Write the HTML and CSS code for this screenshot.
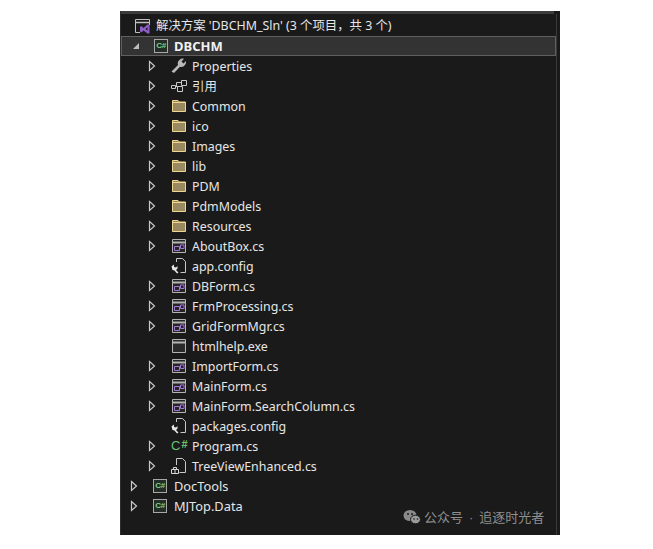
FILE: index.html
```html
<!DOCTYPE html>
<html lang="zh">
<head>
<meta charset="utf-8">
<title>Solution Explorer</title>
<link rel="stylesheet" href="styles.css">
</head>
<body>
<svg class="defs" width="0" height="0" aria-hidden="true">
  <defs>
    <symbol id="arrow" viewBox="0 0 8 12"><path d="M1.500 1.500 6.500 6 1.500 10.500Z" fill="none" stroke="#c8c8c8" stroke-width="1.200"/></symbol>
    <symbol id="folder" viewBox="0 0 16 16"><path d="M1.500 13.500V2.500H7L8.500 4H14.500V13.500Z" fill="#9a8a62" stroke="#f0d68e"/><path d="M2 4.500H14" stroke="#f0d68e"/></symbol>
    <symbol id="form" viewBox="0 0 16 16"><path d="M1.500 1.500H14.500V14.500H1.500Z" fill="#252526" stroke="#b4b4b4"/><path d="M2 4.500H14" stroke="#b4b4b4" stroke-width="2"/><path d="M3.500 8.500H8.500V12.500H3.500ZM9.500 7H13V10.500H9.500Z" fill="none" stroke="#a578d8"/></symbol>
    <symbol id="exe" viewBox="0 0 16 16"><path d="M1.500 1.500H14.500V14.500H1.500Z" fill="#2a2a2a" stroke="#b4b4b4"/><path d="M2 4.500H14" stroke="#b4b4b4" stroke-width="2"/></symbol>
    <symbol id="config" viewBox="0 0 16 16"><path d="M5.500 4V.5H11.500L14.500 3.500V14.500H9.500" fill="none" stroke="#c8c8c8"/><path d="M.5 8.500 3 6.500V9L5 9.500 6.500 8V10.500L5 12 7.500 14.500 6 15.500 3.500 12.500 1.500 12Z" fill="#e8e8e8"/></symbol>
    <symbol id="wrench" viewBox="0 0 16 16"><path d="M.5 13.500 7 7A4.500 4.500 0 0 1 8.500 2 4.500 4.500 0 0 1 13 .8L10.500 3.500 12.500 5.500 15 3A4.500 4.500 0 0 1 14 7 4.500 4.500 0 0 1 9 8.800L3 15Z" fill="#b8b8b8"/></symbol>
    <symbol id="refs" viewBox="0 0 16 16"><path d="M.5 7.500H4.500V10.500H.5ZM10.500 2.500H15.500V7.500H10.500ZM6.500 8.500H11.500V13.500H6.500ZM4.500 8.500H6.500M5.500 8V4.500H10.500" fill="none" stroke="#c8c8c8"/></symbol>
    <symbol id="tree" viewBox="0 0 16 16"><path d="M5.500 7V.5H11.500L14.500 3.500V14.500H8.500" fill="none" stroke="#c8c8c8"/><path d="M.5 11.500H7.500V15.500H.5ZM2.500 9.500H5.500V11.500H2.500ZM4 11.500V15.500" fill="none" stroke="#d8d8d8"/></symbol>
    <symbol id="sln" viewBox="0 0 16 16"><path d="M5 14.500H.5V1.500H14.500V7" fill="none" stroke="#c0c0c0"/><path d="M1 4.500H14" stroke="#c0c0c0" stroke-width="1.500"/><path d="M6.500 8 8.500 10 12.500 6.500H14.500V15.500H12.500L8.500 12.500 6.500 14.500 5 13.500V9ZM12.500 9 10.500 11 12.500 12.800Z" fill="#8c5fc9" fill-rule="evenodd"/></symbol>
  </defs>
</svg>
<main class="panel">
  <div class="topband"></div>
  <div class="tree">
    <div class="row">
      <span class="indent-0"></span>
      <svg class="icon"><use href="#sln"/></svg>
      <span class="label sln">解决方案 'DBCHM_Sln' (3 个项目，共 3 个)</span>
    </div>
    <div class="row selected">
      <svg class="open-arrow" viewBox="0 0 8 8"><path d="M7 1V7H1Z" fill="#bdbdbd"/></svg>
      <span class="proj"><span class="proj-text">C#</span></span>
      <span class="label strong">DBCHM</span>
    </div>
    <div class="row child"><svg class="arrow"><use href="#arrow"/></svg><svg class="icon"><use href="#wrench"/></svg><span class="label">Properties</span></div>
    <div class="row child"><svg class="arrow"><use href="#arrow"/></svg><svg class="icon"><use href="#refs"/></svg><span class="label">引用</span></div>
    <div class="row child"><svg class="arrow"><use href="#arrow"/></svg><svg class="icon"><use href="#folder"/></svg><span class="label">Common</span></div>
    <div class="row child"><svg class="arrow"><use href="#arrow"/></svg><svg class="icon"><use href="#folder"/></svg><span class="label">ico</span></div>
    <div class="row child"><svg class="arrow"><use href="#arrow"/></svg><svg class="icon"><use href="#folder"/></svg><span class="label">Images</span></div>
    <div class="row child"><svg class="arrow"><use href="#arrow"/></svg><svg class="icon"><use href="#folder"/></svg><span class="label">lib</span></div>
    <div class="row child"><svg class="arrow"><use href="#arrow"/></svg><svg class="icon"><use href="#folder"/></svg><span class="label">PDM</span></div>
    <div class="row child"><svg class="arrow"><use href="#arrow"/></svg><svg class="icon"><use href="#folder"/></svg><span class="label">PdmModels</span></div>
    <div class="row child"><svg class="arrow"><use href="#arrow"/></svg><svg class="icon"><use href="#folder"/></svg><span class="label">Resources</span></div>
    <div class="row child"><svg class="arrow"><use href="#arrow"/></svg><svg class="icon"><use href="#form"/></svg><span class="label">AboutBox.cs</span></div>
    <div class="row child"><span class="arrow"></span><svg class="icon"><use href="#config"/></svg><span class="label">app.config</span></div>
    <div class="row child"><svg class="arrow"><use href="#arrow"/></svg><svg class="icon"><use href="#form"/></svg><span class="label">DBForm.cs</span></div>
    <div class="row child"><svg class="arrow"><use href="#arrow"/></svg><svg class="icon"><use href="#form"/></svg><span class="label">FrmProcessing.cs</span></div>
    <div class="row child"><svg class="arrow"><use href="#arrow"/></svg><svg class="icon"><use href="#form"/></svg><span class="label">GridFormMgr.cs</span></div>
    <div class="row child"><span class="arrow"></span><svg class="icon"><use href="#exe"/></svg><span class="label">htmlhelp.exe</span></div>
    <div class="row child"><svg class="arrow"><use href="#arrow"/></svg><svg class="icon"><use href="#form"/></svg><span class="label">ImportForm.cs</span></div>
    <div class="row child"><svg class="arrow"><use href="#arrow"/></svg><svg class="icon"><use href="#form"/></svg><span class="label">MainForm.cs</span></div>
    <div class="row child"><svg class="arrow"><use href="#arrow"/></svg><svg class="icon"><use href="#form"/></svg><span class="label">MainForm.SearchColumn.cs</span></div>
    <div class="row child"><span class="arrow"></span><svg class="icon"><use href="#config"/></svg><span class="label">packages.config</span></div>
    <div class="row child"><svg class="arrow"><use href="#arrow"/></svg><span class="icon cs">C<span class="cs-hash">#</span></span><span class="label">Program.cs</span></div>
    <div class="row child"><svg class="arrow"><use href="#arrow"/></svg><svg class="icon"><use href="#tree"/></svg><span class="label">TreeViewEnhanced.cs</span></div>
    <div class="row top"><svg class="arrow"><use href="#arrow"/></svg><span class="proj"><span class="proj-text">C#</span></span><span class="label">DocTools</span></div>
    <div class="row top"><svg class="arrow"><use href="#arrow"/></svg><span class="proj"><span class="proj-text">C#</span></span><span class="label">MJTop.Data</span></div>
  </div>
  <div class="watermark">
    <svg class="wechat" viewBox="0 0 18 16"><ellipse cx="7" cy="6.500" rx="6.500" ry="5.500" fill="#8a8a8a"/><ellipse cx="12.500" cy="10.500" rx="5" ry="4.300" fill="#9a9a9a" stroke="#1a1a1a"/><circle cx="5" cy="5" r="1" fill="#1a1a1a"/><circle cx="9" cy="5" r="1" fill="#1a1a1a"/><circle cx="11" cy="10" r=".8" fill="#1a1a1a"/><circle cx="14.500" cy="10" r=".8" fill="#1a1a1a"/></svg>
    <span>公众号<span class="dot">·</span>追逐时光者</span>
  </div>
</main>
</body>
</html>
```

FILE: styles.css
```css
* { box-sizing: border-box; }
html, body { margin: 0; padding: 0; background: #fff; }
body { width: 653px; height: 549px; padding: 11px 0 0 120px; overflow: hidden; }
.defs { position: absolute; }
.panel {
  position: relative;
  display: flex;
  flex-direction: column;
  width: 440px;
  height: 524px;
  background: #1a1a1a;
  border-left: 1px solid #2e2e2e;
  font-family: "Noto Sans", "Noto Sans CJK SC", sans-serif;
  font-size: 12.400px;
  color: #e6e6e6;
}
.topband { height: 3px; background: #3c3c3c; margin-right: 6px; flex: none; }
.tree {
  flex: 1;
  margin-right: 3px;
  padding-top: 2px;
  border-right: 1px solid #3a3a3a;
}
.row { display: flex; align-items: center; height: 20px; }
.indent-0 { width: 14px; flex: none; }
.row .icon { width: 16px; height: 16px; flex: none; margin-right: 5px; }
.row .label { white-space: nowrap; line-height: 20px; }
.selected {
  background: #333;
  border: 1px solid #5f5f5f;
}
.open-arrow { width: 8px; height: 8px; margin: 0 14px 0 10px; flex: none; }
.proj {
  display: flex; align-items: center; justify-content: center;
  width: 14px; height: 14px; flex: none; margin-right: 6px;
  background: #242e26; border: 1px solid #a8a8a8;
}
.proj-text { font: bold 8px/1 "Liberation Sans", sans-serif; color: #7fd08a; letter-spacing: -.3px; }
.strong { font-weight: 700; font-size: 13px; color: #f2f2f2; }
.sln { color: #e6e6e6; }
.arrow { width: 8px; height: 12px; flex: none; }
.child { padding-left: 27px; }
.child .arrow { margin-right: 15px; }
.child .label { margin-top: 2px; }
.top { padding-left: 9px; }
.top .arrow { margin-right: 15px; }
.top .proj { margin-right: 7px; }
.top .label { font-size: 12.800px; }
.cs {
  display: flex;
  align-items: flex-start;
  font: 400 13px/16px "Liberation Sans", sans-serif;
  color: #6cc274;
}
.cs-hash { font-size: 11px; line-height: 13px; font-weight: 700; margin-left: 1px; }
.watermark {
  position: absolute;
  left: 282px; top: 496px;
  display: flex; align-items: center; gap: 3px;
  font-family: "Noto Sans CJK SC", sans-serif;
  font-size: 13px;
  color: #8f8f8f;
  white-space: nowrap;
}
.dot { font-family: "Liberation Sans", sans-serif; margin: 0 6px; }
.wechat { width: 18px; height: 16px; flex: none; }
```
